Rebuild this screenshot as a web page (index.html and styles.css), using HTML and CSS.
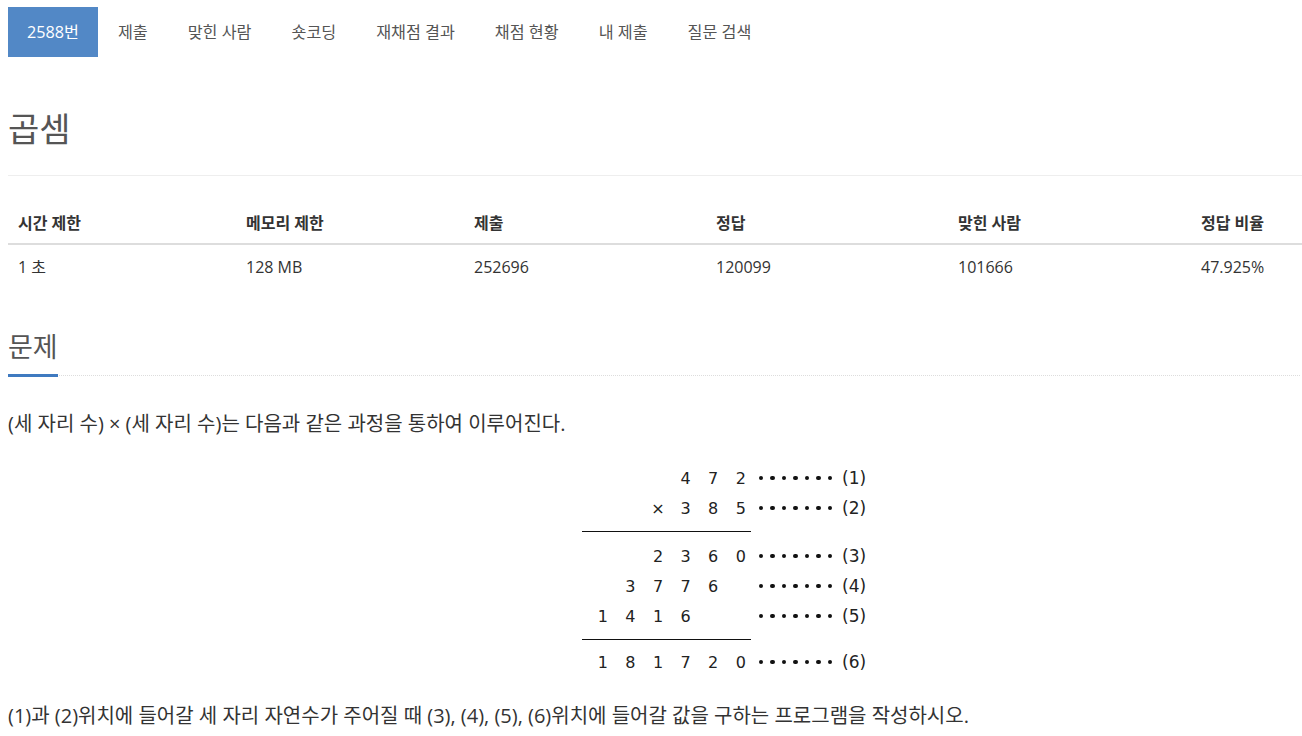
FILE: index.html
```html
<!DOCTYPE html>
<html lang="ko">
<head>
<meta charset="utf-8">
<title>2588번: 곱셈</title>
<link rel="stylesheet" href="styles.css">
</head>
<body>
<div class="page">
  <ul class="tabs">
    <li class="tab active">2588번</li>
    <li class="tab">제출</li>
    <li class="tab">맞힌 사람</li>
    <li class="tab">숏코딩</li>
    <li class="tab">재채점 결과</li>
    <li class="tab">채점 현황</li>
    <li class="tab">내 제출</li>
    <li class="tab">질문 검색</li>
  </ul>

  <div class="page-header">
    <h1 class="title">곱셈</h1>
  </div>

  <table class="info">
    <thead>
      <tr>
        <th class="c1">시간 제한</th>
        <th class="c2">메모리 제한</th>
        <th class="c3">제출</th>
        <th class="c4">정답</th>
        <th class="c5">맞힌 사람</th>
        <th class="c6">정답 비율</th>
      </tr>
    </thead>
    <tbody>
      <tr>
        <td>1 초</td>
        <td>128 MB</td>
        <td>252696</td>
        <td>120099</td>
        <td>101666</td>
        <td>47.925%</td>
      </tr>
    </tbody>
  </table>

  <h2 class="headline"><span class="headline-text">문제</span></h2>

  <p class="text first">(세 자리 수) × (세 자리 수)는 다음과 같은 과정을 통하여 이루어진다.</p>

  <div class="figure">
    <div class="row"><span class="d"></span><span class="d"></span><span class="d"></span><span class="d">4</span><span class="d">7</span><span class="d">2</span><span class="dots"><i></i><i></i><i></i><i></i><i></i><i></i><i></i></span><span class="lbl">(1)</span></div>
    <div class="row"><span class="d"></span><span class="d"></span><span class="d">×</span><span class="d">3</span><span class="d">8</span><span class="d">5</span><span class="dots"><i></i><i></i><i></i><i></i><i></i><i></i><i></i></span><span class="lbl">(2)</span></div>
    <div class="rule rule-a"></div>
    <div class="row"><span class="d"></span><span class="d"></span><span class="d">2</span><span class="d">3</span><span class="d">6</span><span class="d">0</span><span class="dots"><i></i><i></i><i></i><i></i><i></i><i></i><i></i></span><span class="lbl">(3)</span></div>
    <div class="row"><span class="d"></span><span class="d">3</span><span class="d">7</span><span class="d">7</span><span class="d">6</span><span class="d"></span><span class="dots"><i></i><i></i><i></i><i></i><i></i><i></i><i></i></span><span class="lbl">(4)</span></div>
    <div class="row"><span class="d">1</span><span class="d">4</span><span class="d">1</span><span class="d">6</span><span class="d"></span><span class="d"></span><span class="dots"><i></i><i></i><i></i><i></i><i></i><i></i><i></i></span><span class="lbl">(5)</span></div>
    <div class="rule rule-b"></div>
    <div class="row"><span class="d">1</span><span class="d">8</span><span class="d">1</span><span class="d">7</span><span class="d">2</span><span class="d">0</span><span class="dots"><i></i><i></i><i></i><i></i><i></i><i></i><i></i></span><span class="lbl">(6)</span></div>
  </div>

  <p class="text last">(1)과 (2)위치에 들어갈 세 자리 자연수가 주어질 때 (3), (4), (5), (6)위치에 들어갈 값을 구하는 프로그램을 작성하시오.</p>
</div>
</body>
</html>
```

FILE: styles.css
```css
html, body {
  margin: 0;
  padding: 0;
  background: #fff;
}

body {
  font-family: "Open Sans", "Noto Sans CJK KR", sans-serif;
  color: #333;
  font-size: 16px;
}

.page {
  padding: 7px 0 0 8px;
}

.tabs {
  list-style: none;
  margin: 0;
  padding: 0;
  display: flex;
  height: 50px;
}

.tab {
  padding: 0 20px;
  height: 50px;
  line-height: 50px;
  font-size: 16.2px;
  color: #555;
}

.tab.active {
  background: #5288c6;
  color: #fff;
  padding: 0 19px;
}

.page-header {
  margin-top: 52px;
  padding-bottom: 26px;
  border-bottom: 1px solid #eee;
}

.title {
  margin: 0;
  font-size: 34px;
  line-height: 40px;
  font-weight: 400;
  color: #555;
}

.info {
  margin-top: 23px;
  width: 1294px;
  border-collapse: collapse;
  table-layout: fixed;
}

.info th,
.info td {
  box-sizing: border-box;
  text-align: left;
  padding: 10px 10px;
  line-height: 24px;
  font-size: 16px;
  color: #333;
}

.info th {
  font-weight: 700;
  padding: 12px 10px 8px;
  border-bottom: 2px solid #ddd;
}

.c1 { width: 228px; }
.c2 { width: 228px; }
.c3 { width: 242px; }
.c4 { width: 242px; }
.c5 { width: 243px; }
.c6 { width: 111px; }

.headline {
  margin: 42px 2px 0 0;
  font-size: 27px;
  line-height: 32px;
  font-weight: 400;
  color: #555;
  border-bottom: 1px dotted #ddd;
}

.headline-text {
  display: inline-block;
  width: 50px;
  padding-bottom: 11px;
  margin-bottom: -2px;
  border-bottom: 3px solid #3f7ac0;
}

.text {
  font-size: 20px;
  line-height: 30px;
  margin: 0;
  color: #333;
}

.text.first {
  margin-top: 33px;
}

.figure {
  margin: 24px 0 0 574px;
  width: 300px;
  font-family: "DejaVu Sans", "Liberation Sans", sans-serif;
  color: #222;
}

.row {
  display: flex;
  align-items: center;
  height: 30px;
  padding-left: 7px;
}

.d {
  width: 27.6px;
  text-align: center;
  font-size: 16px;
  font-weight: 400;
}

.dots {
  display: flex;
  gap: 7px;
  margin-left: 4px;
}

.dots i {
  display: block;
  width: 4.5px;
  height: 4.5px;
  border-radius: 50%;
  background: #111;
}

.lbl {
  margin-left: 10px;
  font-size: 17px;
}

.rule {
  width: 169px;
  height: 1px;
  background: #111;
}

.rule-a {
  margin: 8px 0 9px 0;
}

.rule-b {
  margin: 8px 0 7px 0;
}

.text.last {
  margin-top: 24px;
}
```
